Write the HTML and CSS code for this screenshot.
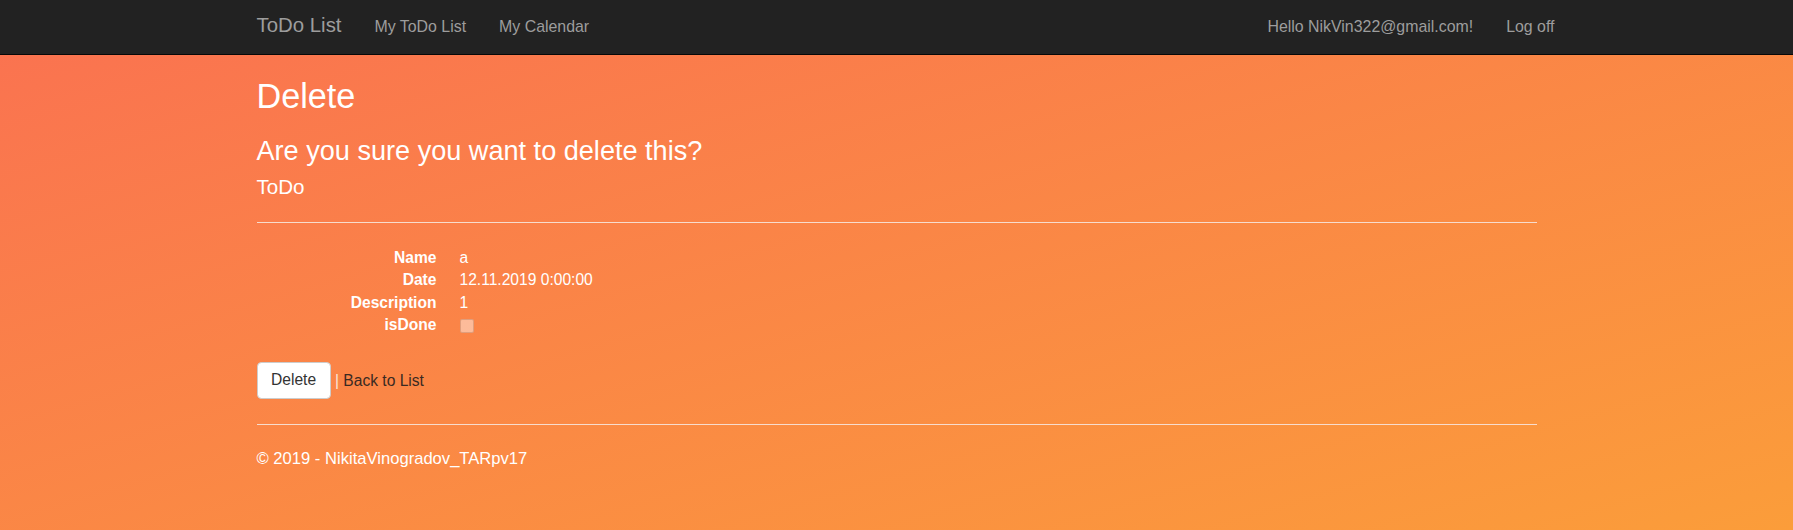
FILE: index.html
```html
<!DOCTYPE html>
<html lang="en">
<head>
<meta charset="utf-8">
<title>Delete - ToDo List</title>
<link rel="stylesheet" href="styles.css">
</head>
<body>
<nav class="navbar">
  <div class="nav-inner">
    <a class="brand" href="#">ToDo List</a>
    <ul class="nav-links">
      <li><a href="#">My ToDo List</a></li>
      <li><a href="#">My Calendar</a></li>
    </ul>
    <ul class="nav-links nav-right">
      <li><a href="#">Hello NikVin322@gmail.com!</a></li>
      <li><a href="#">Log off</a></li>
    </ul>
  </div>
</nav>
<main class="container">
  <h2 class="page-title">Delete</h2>
  <h3 class="confirm">Are you sure you want to delete this?</h3>
  <div>
    <h4 class="entity">ToDo</h4>
    <hr class="rule top-rule">
    <dl class="details">
      <dt>Name</dt><dd>a</dd>
      <dt>Date</dt><dd>12.11.2019 0:00:00</dd>
      <dt>Description</dt><dd>1</dd>
      <dt>isDone</dt><dd><span class="check"></span></dd>
    </dl>
    <form class="actions">
      <button type="button" class="btn">Delete</button> <span class="sep">|</span> <a class="back" href="#">Back to List</a>
    </form>
  </div>
  <hr class="rule footer-rule">
  <footer class="footer">
    <p>&copy; 2019 - NikitaVinogradov_TARpv17</p>
  </footer>
</main>
</body>
</html>
```
FILE: styles.css
```css
* { box-sizing: border-box; }

html, body {
  margin: 0;
  padding: 0;
}

body {
  min-height: 100vh;
  font-family: "Liberation Sans", Arial, sans-serif;
  font-size: 15.6px;
  line-height: 22px;
  color: #fff;
  background: linear-gradient(to bottom right, #fa7151, #fb9d3a);
}

a { text-decoration: none; }

/* navbar */
.navbar {
  height: 55px;
  background: #222;
  border-bottom: 1px solid #080808;
}

.nav-inner {
  width: 1280px;
  margin: 0 auto;
  height: 54px;
  display: flex;
  align-items: flex-start;
}

.brand {
  display: block;
  font-size: 20.4px;
  line-height: 22px;
  padding: 14px 16.5px 0 0;
  color: #9d9d9d;
}

.nav-links {
  list-style: none;
  margin: 0;
  padding: 0;
  display: flex;
}

.nav-links a {
  display: block;
  padding: 15.5px 16.5px 0;
  line-height: 22px;
  font-size: 15.9px;
  color: #9d9d9d;
}

.nav-right {
  margin-left: auto;
  margin-right: -34.5px;
}

/* content */
.container {
  width: 1280px;
  margin: 0 auto;
}

.page-title {
  margin: 23px 0 0;
  font-size: 34.2px;
  line-height: 36.3px;
  font-weight: 500;
}

.confirm {
  margin: 22px 0 0;
  font-size: 27.1px;
  line-height: 29.04px;
  font-weight: 500;
}

.entity {
  margin: 11px 0 0;
  font-size: 20.6px;
  line-height: 21.78px;
  font-weight: 500;
}

.rule {
  margin: 0;
  height: 0;
  border: 0;
  border-top: 1px solid #f7dccd;
}

.top-rule { margin-top: 24px; }

.details {
  margin: 23.4px 0 0;
  display: grid;
  grid-template-columns: 180px 1fr;
  column-gap: 23px;
  line-height: 22.6px;
}

.details dt {
  font-weight: 700;
  text-align: right;
}

.details dd {
  margin: 0;
}

.check {
  display: block;
  width: 14px;
  height: 13.5px;
  margin-top: 4.8px;
  border-radius: 2px;
  background: rgba(255, 255, 255, 0.45);
  border: 1px solid rgba(140, 70, 40, 0.25);
}

.actions {
  margin: 25px 0 0;
}

.btn {
  display: inline-block;
  font-family: inherit;
  font-size: 15.6px;
  line-height: 22px;
  padding: 6.6px 13.5px;
  color: #333;
  background: #fff;
  border: 1px solid #ccc;
  border-radius: 4.4px;
  vertical-align: baseline;
}

.sep { color: #fbe6d8; }

.back { color: #3a2a22; }

.footer-rule { margin-top: 25px; }

.footer p {
  margin: 22.7px 0 0;
  font-size: 16.6px;
}
```
